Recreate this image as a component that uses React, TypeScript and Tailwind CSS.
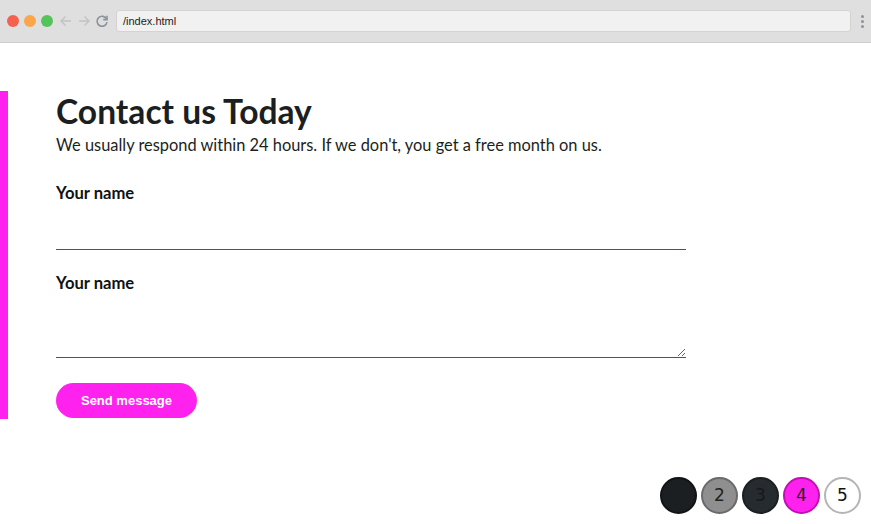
import React from "react";

function BrowserBar() {
  return (
    <div className="flex h-[43px] items-center border-b border-[#cfcfcf] bg-[#dfdfdf] pl-[7px] pr-[7px]">
      <div className="flex items-center gap-[5px]">
        <span className="h-[12px] w-[12px] rounded-full bg-[#f4624f]" />
        <span className="h-[12px] w-[12px] rounded-full bg-[#fba64a]" />
        <span className="h-[12px] w-[12px] rounded-full bg-[#53c35a]" />
      </div>
      <div className="ml-[5px] flex items-center gap-[2px] text-[#c3c3c3]">
        <svg width="16" height="16" viewBox="0 0 16 16" fill="none" stroke="currentColor" strokeWidth="1.4">
          <path d="M13 8H3M7.5 3.5L3 8l4.5 4.5" />
        </svg>
        <svg width="16" height="16" viewBox="0 0 16 16" fill="none" stroke="currentColor" strokeWidth="1.4">
          <path d="M3 8h10M8.5 3.5L13 8l-4.5 4.5" />
        </svg>
        <svg width="16" height="16" viewBox="0 0 16 16" fill="none" stroke="#8a9398" strokeWidth="1.6">
          <path d="M12.6 6.2A5 5 0 1 0 13 9" />
          <path d="M13 2.8v3.8H9.2" fill="none" />
        </svg>
      </div>
      <div className="ml-[6px] flex h-[22px] flex-1 items-center rounded-[3px] border border-[#d3d3d3] bg-[#f1f1f1] px-[6px] text-[11px] text-[#222] [font-family:'Liberation_Sans',sans-serif]">
        /index.html
      </div>
      <div className="ml-[10px] flex flex-col gap-[2px]">
        <span className="h-[3px] w-[3px] rounded-full bg-[#8a9398]" />
        <span className="h-[3px] w-[3px] rounded-full bg-[#8a9398]" />
        <span className="h-[3px] w-[3px] rounded-full bg-[#8a9398]" />
      </div>
    </div>
  );
}

function Pager() {
  const base =
    "flex h-[37px] w-[37px] items-center justify-center rounded-full border-2 text-[17px] [font-family:'DejaVu_Sans',sans-serif]";
  return (
    <div className="absolute bottom-[10px] right-[10px] flex gap-[4px]">
      <span className={`${base} border-[#111417] bg-[#1b1f22] text-[#1b1f22]`}>1</span>
      <span className={`${base} border-[#6a6a6a] bg-[#8f8f8f] text-[#222]`}>2</span>
      <span className={`${base} border-[#1b1f22] bg-[#252b2e] text-[#15191b]`}>3</span>
      <span className={`${base} border-[#c20fb5] bg-[#ff22ee] text-[#222]`}>4</span>
      <span className={`${base} border-[#b5b5b5] bg-white text-[#111]`}>5</span>
    </div>
  );
}

export default function App() {
  return (
    <div className="relative h-[524px] w-[871px] overflow-hidden bg-white [font-family:'Lato',sans-serif]">
      <BrowserBar />
      <div className="mt-[48px] flex">
        <div className="w-[8px] bg-[#ff22ee]" />
        <div className="w-[678px] pb-[1px] pl-[48px]">
          <h1 className="text-[33.6px] font-bold leading-[40px] text-[#1b1f22]">Contact us Today</h1>
          <p className="mt-[2px] text-[16.4px] leading-[24px] text-[#1b1f22]">
            We usually respond within 24 hours. If we don't, you get a free month on us.
          </p>
          <form className="mt-[26px]">
            <label className="block text-[16.6px] font-bold leading-[20px] text-[#111]">Your name</label>
            <input
              type="text"
              className="mt-[10px] block h-[37px] w-full border-b border-[#3d5a66] bg-transparent outline-none"
            />
            <label className="mt-[23px] block text-[16.6px] font-bold leading-[20px] text-[#111]">Your name</label>
            <textarea className="mt-[11px] block h-[54px] w-full border-b border-[#3d5a66] bg-transparent outline-none" />
            <button
              type="button"
              className="mt-[25px] h-[35px] w-[141px] rounded-full bg-[#ff22ee] text-[13px] font-bold text-white [font-family:'Liberation_Sans',sans-serif]"
            >
              Send message
            </button>
          </form>
        </div>
      </div>
      <Pager />
    </div>
  );
}
